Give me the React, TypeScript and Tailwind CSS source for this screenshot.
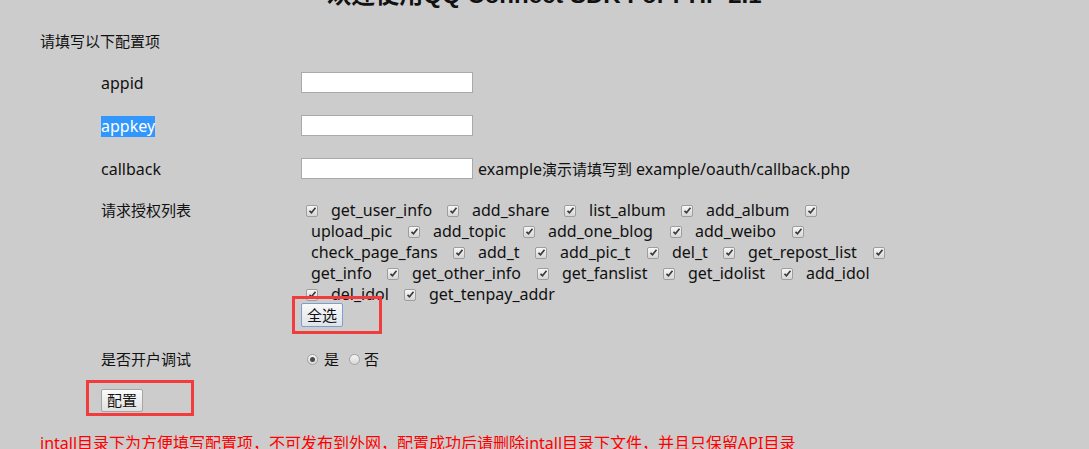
import React from 'react';

type Tok = { cb: true } | { cb?: false; text: string; w: string };

// 授权列表：每一行手工断行，宽度按截图量出来
const permLines: { start: string; items: Tok[] }[] = [
  {
    start: 'ml-[5px]',
    items: [
      { cb: true }, { text: 'get_user_info', w: 'w-[101px]' },
      { cb: true }, { text: 'add_share', w: 'w-[77px]' },
      { cb: true }, { text: 'list_album', w: 'w-[77px]' },
      { cb: true }, { text: 'add_album', w: 'w-[84px]' },
      { cb: true },
    ],
  },
  {
    start: 'ml-[10px]',
    items: [
      { text: 'upload_pic', w: 'w-[82px]' }, { cb: true },
      { text: 'add_topic', w: 'w-[75px]' }, { cb: true },
      { text: 'add_one_blog', w: 'w-[107px]' }, { cb: true },
      { text: 'add_weibo', w: 'w-[82px]' }, { cb: true },
    ],
  },
  {
    start: 'ml-[10px]',
    items: [
      { text: 'check_page_fans', w: 'w-[127px]' }, { cb: true },
      { text: 'add_t', w: 'w-[42px]' }, { cb: true },
      { text: 'add_pic_t', w: 'w-[72px]' }, { cb: true },
      { text: 'del_t', w: 'w-[36px]' }, { cb: true },
      { text: 'get_repost_list', w: 'w-[110px]' }, { cb: true },
    ],
  },
  {
    start: 'ml-[10px]',
    items: [
      { text: 'get_info', w: 'w-[61px]' }, { cb: true },
      { text: 'get_other_info', w: 'w-[110px]' }, { cb: true },
      { text: 'get_fanslist', w: 'w-[86px]' }, { cb: true },
      { text: 'get_idolist', w: 'w-[78px]' }, { cb: true },
      { text: 'add_idol', w: 'w-[66px]' },
    ],
  },
  {
    start: 'ml-[5px]',
    items: [
      { cb: true }, { text: 'del_idol', w: 'w-[58px]' },
      { cb: true }, { text: 'get_tenpay_addr', w: 'w-[128px]' },
    ],
  },
];

const CheckBox = () => (
  <span className="inline-flex items-center justify-center w-[12px] h-[12px] shrink-0 mr-[13px] rounded-[2px] border border-[#9e9e9e] bg-linear-to-b from-[#f7f7f7] to-[#d6d6d6]">
    <svg width="9" height="9" viewBox="0 0 9 9">
      <path d="M1.5 4.8 L3.5 6.8 L7.5 1.8" fill="none" stroke="#3a3a3a" strokeWidth="1.7" />
    </svg>
  </span>
);

const Radio = ({ checked }: { checked?: boolean }) => (
  <span className="inline-flex items-center justify-center w-[11px] h-[11px] shrink-0 rounded-full border border-[#a2a2a2] bg-linear-to-b from-[#f6f6f6] to-[#d8d8d8]">
    {checked && <span className="w-[5px] h-[5px] rounded-full bg-[#4a4a4a]" />}
  </span>
);

const Field = () => (
  <input type="text" className="w-[172px] h-[21px] bg-white border border-[#a9a9a9] outline-none px-1 text-[13px]" />
);

const App: React.FC = () => {
  return (
    <div className="min-h-screen h-[449px] overflow-hidden bg-[#cccccc] text-[#111] text-[15px] font-['Noto_Sans','Noto_Sans_CJK_SC',sans-serif]">
      {/* 标题（截图顶部被截掉一半） */}
      <h1 className="-mt-[21px] text-center text-[24px] leading-[32px] font-bold font-['Liberation_Sans','Noto_Sans_CJK_SC',sans-serif]">
        欢迎使用QQ Connect SDK For PHP 2.1
      </h1>

      <div className="mt-[20px] pl-[40px] leading-[21px]">请填写以下配置项</div>

      <div className="mt-[9px] pl-[101px]">
        <div className="flex items-center h-[43px]">
          <div className="w-[200px] text-[16px]">appid</div>
          <Field />
        </div>
        <div className="flex items-center h-[43px]">
          <div className="w-[200px] text-[16px]">
            <span className="inline-block leading-[21px] bg-[#3297fd] text-white">appkey</span>
          </div>
          <Field />
        </div>
        <div className="flex items-center h-[43px]">
          <div className="w-[200px] text-[16px]">callback</div>
          <Field />
          <span className="ml-[5px] whitespace-nowrap">
            <span className="text-[16px]">example</span>演示请填写到 <span className="text-[16px]">example/oauth/callback.php</span>
          </span>
        </div>

        {/* 请求授权列表 */}
        <div className="flex items-start mt-[10px]">
          <div className="w-[200px] leading-[21px]">请求授权列表</div>
          <div>
            <div className="text-[16px]">
              {permLines.map((line, i) => (
                <div key={i} className={`flex items-center h-[21px] ${line.start}`}>
                  {line.items.map((t, j) =>
                    t.cb ? (
                      <CheckBox key={j} />
                    ) : (
                      <span key={j} className={`${t.w} mr-[15px] whitespace-nowrap leading-[21px]`}>{t.text}</span>
                    )
                  )}
                </div>
              ))}
            </div>
            <div className="relative w-fit -mt-[2px]">
              <button className="w-[42px] h-[24px] rounded-[2px] border border-[#7b9fd0] bg-linear-to-b from-[#f9f9f9] to-[#dfe3ea] text-[15px] leading-none">
                全选
              </button>
              <span className="absolute -left-[9px] -top-[7px] w-[90px] h-[38px] border-[3px] border-[#f03c3c] pointer-events-none" />
            </div>
          </div>
        </div>

        {/* 调试开关 */}
        <div className="flex items-center mt-[22px] h-[21px]">
          <div className="w-[200px]">是否开户调试</div>
          <div className="flex items-center ml-[6px]">
            <Radio checked />
            <span className="ml-[6px]">是</span>
            <span className="ml-[10px]"><Radio /></span>
            <span className="ml-[4px]">否</span>
          </div>
        </div>

        <div className="relative w-fit mt-[19px]">
          <button className="w-[42px] h-[23px] rounded-[2px] border border-[#a5a5a5] bg-linear-to-b from-[#fbfbfb] to-[#e0e0e0] text-[15px] leading-none">
            配置
          </button>
          <span className="absolute -left-[15px] -top-[9px] w-[108px] h-[36px] border-[3px] border-[#f03c3c] pointer-events-none" />
        </div>
      </div>

      <div className="mt-[21px] pl-[40px] leading-[21px] text-[16px] text-[#ff0000] whitespace-nowrap">
        intall目录下为方便填写配置项，不可发布到外网，配置成功后请删除intall目录下文件，并且只保留API目录
      </div>
    </div>
  );
};

export default App;
